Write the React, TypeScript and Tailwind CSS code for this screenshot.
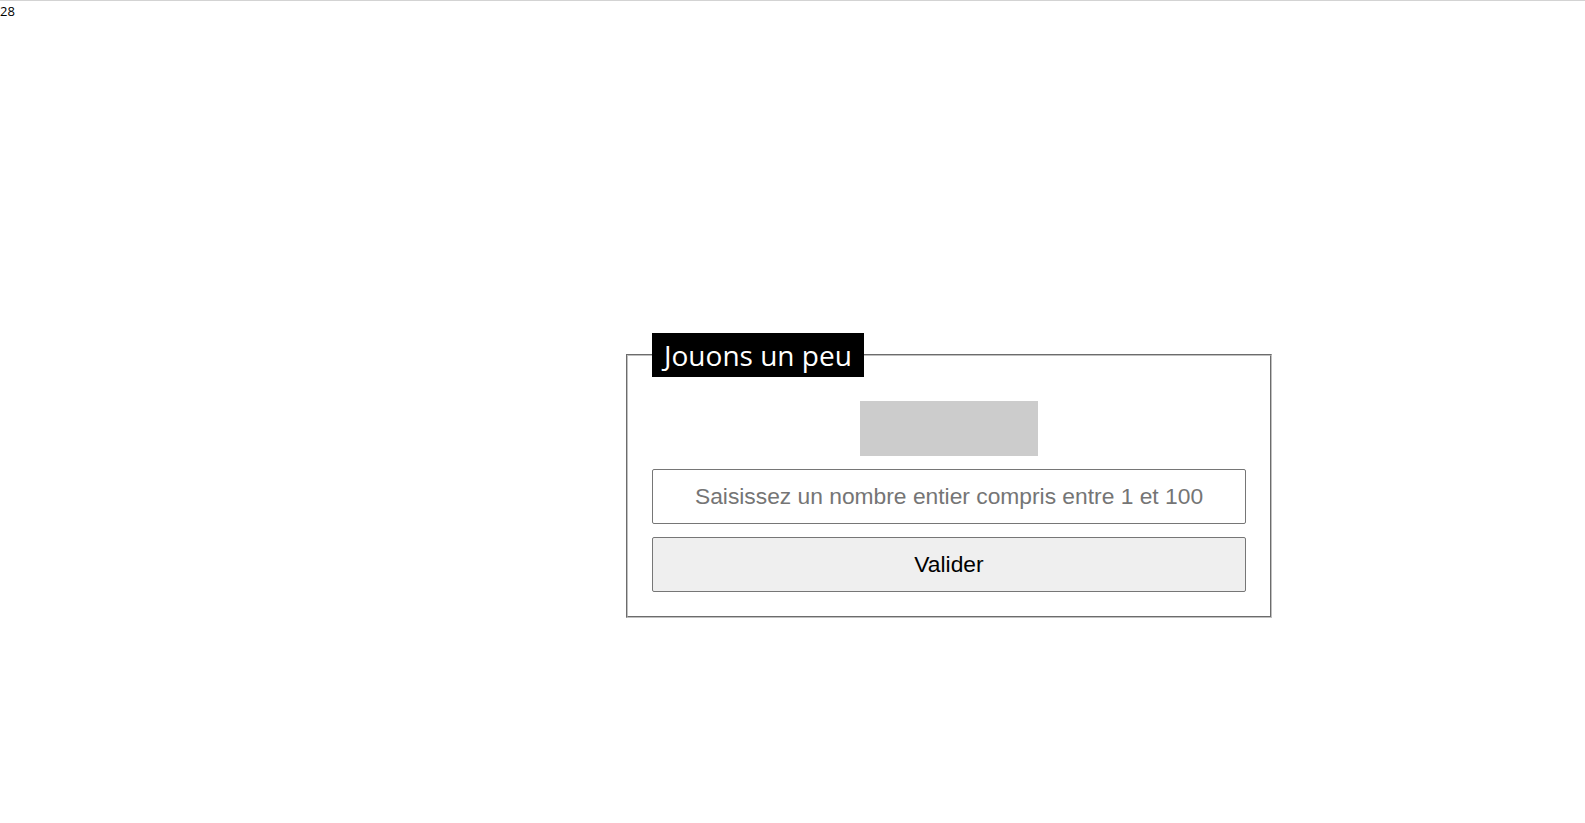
import { useState } from 'react'

export default function App() {
  const [valeur, setValeur] = useState('')

  return (
    <div className="min-h-screen bg-white border-t border-[#d3d3d3] font-['Open_Sans',sans-serif]">
      <div className="text-[13px] leading-[20px] text-black">28</div>

      <fieldset className="ml-[626px] mt-[312px] w-[646px] border-2 border-[#c0c0c0] [border-style:groove] px-6 pt-[24px] pb-[24px]">
        <legend className="bg-black text-white px-3 py-1 text-[28px] leading-[36px] font-['Open_Sans',sans-serif]">
          Jouons un peu
        </legend>

        {/* Zone du résultat */}
        <div className="mx-auto w-[178px] h-[55px] bg-[#cccccc]" />

        <input
          type="text"
          value={valeur}
          onChange={(e) => setValeur(e.target.value)}
          placeholder="Saisissez un nombre entier compris entre 1 et 100"
          className="mt-[13px] block w-full h-[55px] border border-[#767676] rounded-[2px] bg-white text-center text-[22.8px] font-['Liberation_Sans',Arial,sans-serif] placeholder:text-[#757575] focus:outline-none"
        />

        <button
          type="button"
          className="mt-[13px] block w-full h-[55px] border border-[#767676] rounded-[2px] bg-[#efefef] text-center text-[22.8px] text-black font-['Liberation_Sans',Arial,sans-serif]"
        >
          Valider
        </button>
      </fieldset>
    </div>
  )
}
